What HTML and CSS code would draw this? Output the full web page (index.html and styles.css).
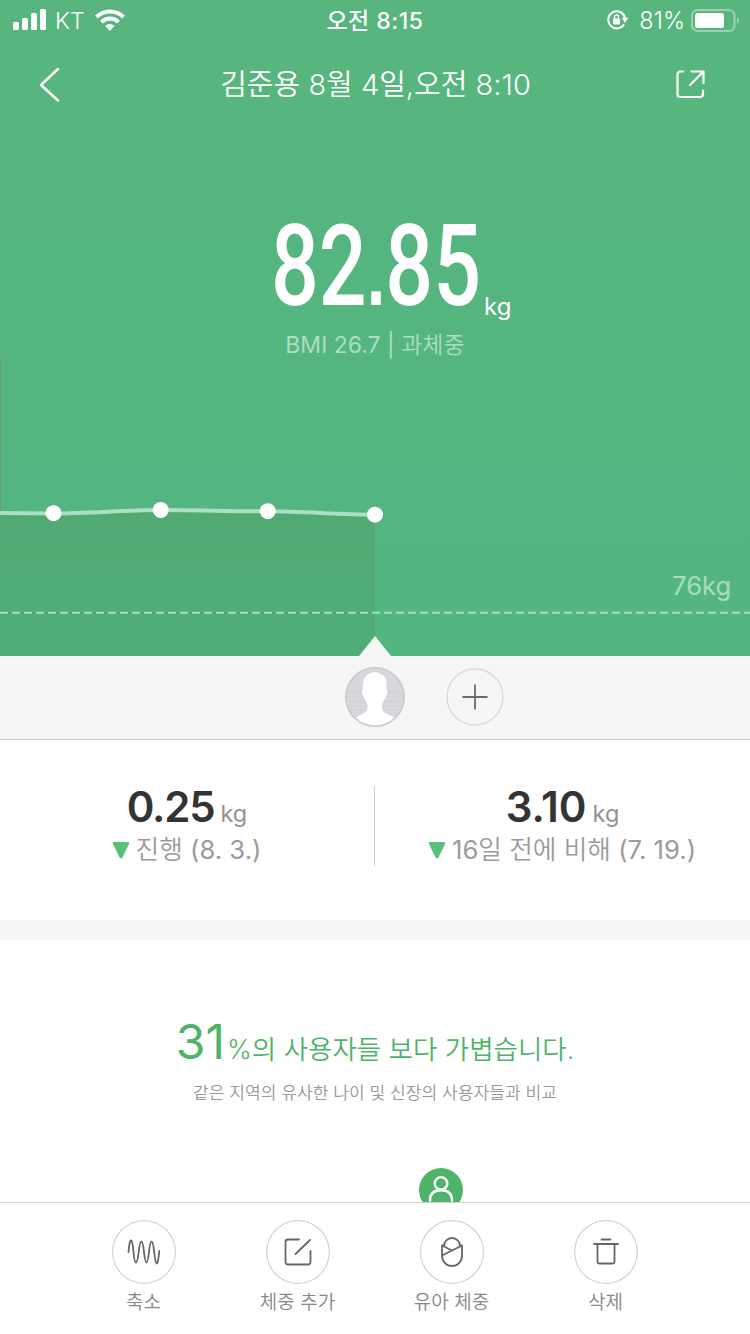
FILE: index.html
```html
<!DOCTYPE html>
<html lang="ko">
<head>
<meta charset="utf-8">
<title>체중 기록</title>
<link rel="stylesheet" href="styles.css">
</head>
<body>
<main class="app">
  <section class="hero">
    <div class="status">
      <div class="status-left">
        <svg class="signal" width="34" height="22" viewBox="0 0 34 22" fill="#fff"><rect x="0" y="13" width="6" height="8" rx="1.5"/><rect x="9" y="9" width="6" height="12" rx="1.5"/><rect x="18" y="4" width="6" height="17" rx="1.5"/><rect x="27" y="0" width="6" height="21" rx="1.5"/></svg>
        <span class="carrier">KT</span>
        <svg class="wifi" width="30" height="22" viewBox="0 0 30 22" fill="none" stroke="#fff" stroke-width="4"><path d="M1.4 8A19.3 19.3 0 0 1 28.600 8"/><path d="M6.500 13.100A12 12 0 0 1 23.500 13.100"/><path d="M10.200 17Q14.800 13 19.600 17L14.900 21.700Z" fill="#fff" stroke="none"/></svg>
      </div>
      <span class="clock">오전 8:15</span>
      <div class="status-right">
        <svg class="lock" width="22" height="20" viewBox="0 0 22 20" fill="none" stroke="#fff"><path d="M17.100 14.200A8.500 8.500 0 1 1 18 7.700" stroke-width="2"/><path d="M14.900 7.800H21.300L18 13Z" fill="#fff" stroke="none"/><rect x="6" y="8.600" width="7" height="6" rx="1" fill="#fff" stroke="none"/><path d="M7.500 9V7a2 2 0 0 1 4 0v2" stroke-width="1.400"/></svg>
        <span class="percent">81%</span>
        <svg class="battery" width="48" height="23" viewBox="0 0 48 23"><rect x="1" y="1" width="42.500" height="21" rx="5.500" fill="none" stroke="#fff" stroke-opacity=".4" stroke-width="2"/><rect x="4" y="4" width="29" height="15" rx="2.500" fill="#fff"/><path d="M46 8q2 1 2 3.500t-2 3.500z" fill="#fff" fill-opacity=".4"/></svg>
      </div>
    </div>
    <header class="nav">
      <svg class="back" width="22" height="36" viewBox="0 0 22 36" fill="none" stroke="#fff" stroke-width="2.500" stroke-linecap="round" stroke-linejoin="round"><path d="M19 2 2 18l17 15.500"/></svg>
      <h1 class="title">김준용 8월 4일,오전 8:10</h1>
      <svg class="share" width="30" height="30" viewBox="0 0 30 30" fill="none" stroke="#fff" stroke-width="2.200" stroke-linecap="round"><path d="M7 1.500H4.500a3 3 0 0 0-3 3V24a3 3 0 0 0 3 3H24a3 3 0 0 0 3-3V20.500M15.500 1.500H27.500V13M27 2 14 15"/></svg>
    </header>
    <div class="reading">
      <div class="weight"><span class="weight-value">82<span class="dot">.</span>85</span><span class="weight-unit">kg</span></div>
      <p class="bmi">BMI 26.7 | 과체중</p>
    </div>
    <svg class="chart" width="750" height="296" viewBox="0 0 750 296">
      <defs><linearGradient id="area" x1="0" y1="0" x2="0" y2="1"><stop offset="0" stop-color="#52a972"/><stop offset=".45" stop-color="#4fac74"/><stop offset="1" stop-color="#51ad76"/></linearGradient></defs>
      <path d="M0 153C18 153 36 153.500 53.500 153.500 90 153.500 125 150 160.500 150 196 150 232 151.300 267.500 151.300 303 151.300 339 154.700 375 154.700V296H0Z" fill="url(#area)"/>
      <path d="M.5 0V151" stroke="#719384"/>
      <path d="M0 153C18 153 36 153.500 53.500 153.500 90 153.500 125 150 160.500 150 196 150 232 151.300 267.500 151.300 303 151.300 339 154.700 375 154.700" fill="none" stroke="#abdec3" stroke-width="4"/>
      <g fill="#fff"><circle cx="53.500" cy="153.200" r="8"/><circle cx="160.700" cy="150" r="8"/><circle cx="267.800" cy="151.200" r="8"/><circle cx="375" cy="154.700" r="8"/></g>
      <path d="M0 252.700H750" stroke="#a9dcc1" stroke-width="2" stroke-dasharray="8 4"/>
      <text class="goal" x="672" y="235">76kg</text>
      <path d="M375 276 391 296H359Z" fill="#f5f7f6"/>
    </svg>
  </section>

  <section class="members">
    <svg class="avatar" width="60" height="60" viewBox="0 0 60 60">
      <defs><clipPath id="face"><circle cx="30" cy="30" r="29"/></clipPath></defs>
      <circle cx="30" cy="30" r="29" fill="#d7d8de"/>
      <path d="M3 25.500H57M1 30H59M1 34.500H59M2 39H58M4 43.500H56" stroke="#d0d1d7" stroke-width="1"/>
      <path clip-path="url(#face)" d="M30 5C34 5 36 8 39 9 42 12 41.500 16 41.500 22L42.500 25 41 31 39.500 32 37 37V42C37 46 44 47 50 51V60H10V51C16 47 22.500 46 22.500 41V37L19.500 32 17.500 28 17 24 18 22C18 16 18 12 21 9 24 6 27 5 30 5Z" fill="#fff"/>
      <circle cx="30" cy="30" r="29.200" fill="none" stroke="#c9cacc" stroke-width="1.600"/>
    </svg>
    <svg class="add" width="58" height="58" viewBox="0 0 58 58" fill="none"><circle cx="29" cy="29" r="28" stroke="#d8dad9" stroke-width="1.300"/><path d="M16.500 29h25M29 16.500v25" stroke="#6b6d6c" stroke-width="1.800"/></svg>
  </section>

  <section class="stats">
    <div class="stat">
      <div class="stat-top"><b class="stat-value tight">0.25</b><span class="stat-unit">kg</span></div>
      <div class="stat-note"><svg width="16" height="17" viewBox="0 0 16 17"><path d="M0 0H16V2L9.500 15.500Q8 17.500 6.500 15.500L0 2Z" fill="#57c27c"/></svg><span>진행 (8. 3.)</span></div>
    </div>
    <div class="stat">
      <div class="stat-top"><b class="stat-value">3.10</b><span class="stat-unit">kg</span></div>
      <div class="stat-note"><svg width="16" height="17" viewBox="0 0 16 17"><path d="M0 0H16V2L9.500 15.500Q8 17.500 6.500 15.500L0 2Z" fill="#57c27c"/></svg><span>16일 전에 비해 (7. 19.)</span></div>
    </div>
  </section>

  <section class="compare">
    <p class="rank"><span class="rank-value">31</span><span class="rank-text">%의 사용자들 보다 가볍습니다.</span></p>
    <p class="basis">같은 지역의 유사한 나이 및 신장의 사용자들과 비교</p>
    <svg class="pin" width="44" height="44" viewBox="0 0 44 44"><circle cx="22" cy="22" r="22" fill="#50b36b"/><g fill="none" stroke="#fff" stroke-width="2.500" stroke-linecap="round"><circle cx="22" cy="15.500" r="6.300"/><path d="M11 32.500C11 25.500 15 22.200 22 22.200S33 25.500 33 32.500"/></g></svg>
  </section>

  <nav class="toolbar">
    <div class="tool"><div class="ring"><svg width="64" height="64" viewBox="0 0 64 64"><path d="M16.500 32C18 15 20.300 18 21.500 32S25 46 26.700 32 30.500 18 32 32 35.500 46 37 32 40.700 18 42.200 32 45.500 49 47.300 31" /></svg></div><span class="label">축소</span></div>
    <div class="tool"><div class="ring"><svg width="64" height="64" viewBox="0 0 64 64"><path d="M33 19.500H22A2.500 2.500 0 0 0 19.500 22V42A2.500 2.500 0 0 0 22 44.500H42A2.500 2.500 0 0 0 44.500 42V31M29.500 34 44 20"/></svg></div><span class="label">체중 추가</span></div>
    <div class="tool"><div class="ring"><svg width="64" height="64" viewBox="0 0 64 64"><path d="M24 26A7.900 7.900 0 0 1 40 26M22 25.500V36A10 10 0 0 0 42 36V25.500L22 35.500M22 25.500 32 30.500M22 25.500 24 25M42 25.500 40 25"/></svg></div><span class="label">유아 체중</span></div>
    <div class="tool"><div class="ring"><svg width="64" height="64" viewBox="0 0 64 64"><path d="M27.500 19.500H36.500M20 24H44M23.500 24V42A1.500 1.500 0 0 0 25 43.500H39A1.500 1.500 0 0 0 40.500 42V24"/></svg></div><span class="label">삭제</span></div>
  </nav>
</main>
</body>
</html>
```
FILE: styles.css
```css
* { box-sizing: border-box; margin: 0; padding: 0; }
body { width: 750px; height: 1334px; overflow: hidden; background: #fff; font-family: Inter, "Noto Sans CJK KR DemiLight", "Noto Sans CJK KR", sans-serif; font-weight: 350; }
svg { display: block; flex: none; }
span, p, h1, b { white-space: nowrap; }
.app { display: flex; flex-direction: column; height: 1334px; }

.hero { height: 656px; flex: none; color: #fff; background: linear-gradient(#58b57e, #52b680); }
.status { display: grid; grid-template-columns: 250px 1fr 250px; height: 40px; align-items: center; }
.status-left { display: flex; align-items: center; padding-left: 13px; }
.carrier { margin-left: 8px; width: 40px; font-size: 23px; line-height: 38px; padding-top: 2px; }
.clock { text-align: center; font-family: Inter, "Noto Sans CJK KR", sans-serif; font-size: 23px; font-weight: 500; line-height: 38px; padding-top: 2px; letter-spacing: .5px; }
.status-right { display: flex; align-items: center; justify-content: flex-end; padding-right: 11px; }
.percent { margin: 0 6px 0 10px; font-size: 23.500px; line-height: 38px; padding-top: 2px; }
.nav { display: flex; height: 88px; align-items: center; justify-content: space-between; padding: 1px 44px 0 39px; }
.title { font-size: 29px; line-height: 84px; padding: 1px 0 0 14px; font-weight: 350; }
.reading { height: 232px; display: flex; flex-direction: column; align-items: center; }
.weight { display: flex; width: 750px; height: 198px; padding-left: 271px; }
.weight-value { width: 213px; font-family: Roboto, sans-serif; font-weight: 500; font-size: 113px; line-height: 118px; margin-top: 80px; transform: scaleX(.745); transform-origin: 0 0; }
.dot { font-family: "Liberation Sans", sans-serif; font-weight: 700; font-size: 90px; line-height: 0; }
.weight-unit { font-size: 24px; font-weight: 400; line-height: 30px; margin-top: 164px; }
.bmi { font-size: 23px; font-weight: 400; line-height: 36px; padding-top: 1px; color: #abdec3; }
.goal { font-size: 25.700px; font-weight: 400; fill: #a9dcc1; }

.members { display: flex; flex: none; height: 84px; align-items: flex-start; padding: 11px 0 0 345px; gap: 41px; background: #f5f7f6; border-bottom: 1px solid #c5c8c7; }
.add { margin-top: 1px; }

.stats { display: grid; grid-template-columns: 374px 376px; flex: none; height: 200px; padding-top: 46px; border-bottom: 20px solid #f8f8f8; }
.stat { height: 80px; }
.stat + .stat { border-left: 1px solid #ccc; }
.stat-top { display: flex; justify-content: center; align-items: baseline; gap: 6px; height: 46px; line-height: 42px; }
.stat-value { font-size: 42px; font-weight: 600; color: #333; }
.tight { letter-spacing: -1.200px; }
.stat-unit { font-size: 23.500px; font-weight: 400; color: #929292; }
.stat-note { display: flex; justify-content: center; align-items: center; gap: 7px; height: 36px; font-size: 25.700px; font-weight: 400; line-height: 36px; color: #9b9b9b; }

.compare { flex: none; height: 262px; overflow: hidden; padding-top: 72px; }
.rank { height: 60px; line-height: 60px; text-align: center; color: #50b36b; }
.rank-value { font-size: 48px; font-weight: 400; margin-right: 2px; }
.rank-text { font-size: 26.500px; }
.basis { height: 40px; line-height: 38px; padding-top: 2px; text-align: center; color: #999; font-size: 17.100px; }
.pin { margin: 56px 0 0 419px; }

.toolbar { display: flex; flex: none; height: 132px; padding: 17px 67px 0; background: #fff; border-top: 1px solid #d2d2d2; }
.tool { width: 154px; display: flex; flex-direction: column; align-items: center; }
.ring { width: 64px; height: 64px; border-radius: 50%; box-shadow: inset 0 0 0 1.200px #d4d4d4; }
.ring path { fill: none; stroke: #666; stroke-width: 1.800px; stroke-linecap: round; stroke-linejoin: round; }
.label { font-size: 19px; line-height: 34px; padding: 2px 1px 0 0; color: #888; }
```
